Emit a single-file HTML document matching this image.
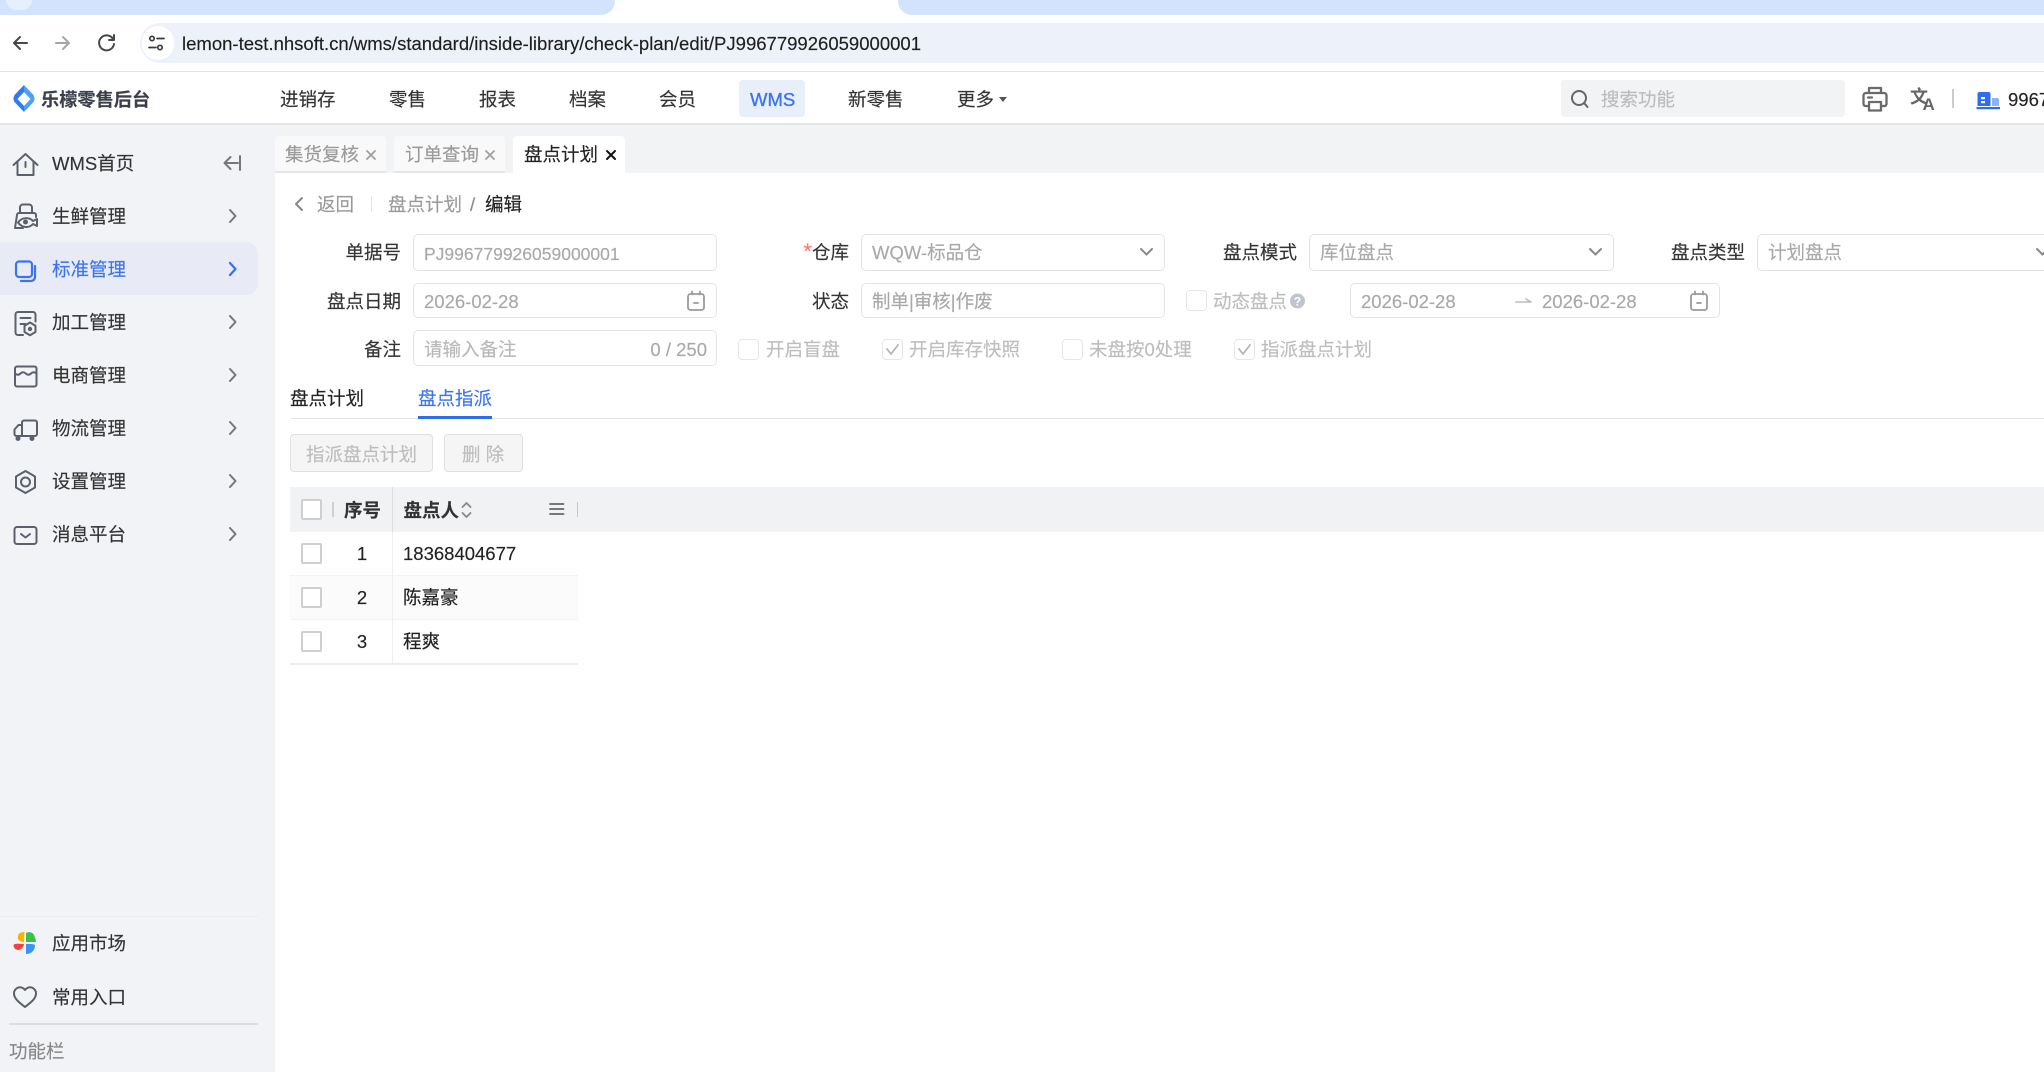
<!DOCTYPE html>
<html lang="zh-CN">
<head>
<meta charset="utf-8">
<title>盘点计划</title>
<style>
html,body{margin:0;padding:0;width:2044px;height:1072px;overflow:hidden;background:#fff}
body{position:relative;font-family:"Liberation Sans","Noto Sans CJK SC",sans-serif;font-size:18.5px;color:#333}
.a{position:absolute;box-sizing:border-box}
.t{position:absolute;white-space:nowrap;height:26px;line-height:26px;margin-top:1px;-webkit-text-stroke:.15px currentColor}
.r{text-align:right}
.inp{position:absolute;box-sizing:border-box;background:#fff;border:1.5px solid #e3e3e3;border-radius:5px}
.v{color:#a8a8a8}
.cb{position:absolute;box-sizing:border-box;width:21px;height:21px;border:1.5px solid #e6e6e6;border-radius:4px;background:#fff}
.cbt{position:absolute;box-sizing:border-box;width:21px;height:21px;border:2.5px solid #cfcfcf;border-radius:2px;background:#fff}
.dis{color:#bdbdbd}
.row{margin-top:0}
svg{position:absolute;left:0;top:0;overflow:visible}
</style>
</head>
<body>
<!-- browser chrome -->
<div class="a" style="left:0;top:0;width:615px;height:15px;background:#d3e3fd;border-bottom-right-radius:14px"></div>
<div class="a" style="left:898px;top:0;width:1146px;height:15px;background:#d3e3fd;border-bottom-left-radius:14px"></div>
<div class="a" style="left:6px;top:-14px;width:26px;height:24px;background:#e6effd;border-radius:10px"></div>
<div class="a" style="left:0;top:15px;width:2044px;height:57px;background:#fff;border-bottom:1.5px solid #e2e2e2"></div>
<div class="a" style="left:140px;top:23px;width:1904px;height:40px;background:#edf1f9;border-radius:20px 0 0 20px"></div>
<div class="a" style="left:142px;top:26px;width:32px;height:34px;background:#fff;border-radius:17px"></div>
<div class="t" style="left:182px;top:30px;font-size:18.53px;color:#1f1f1f">lemon-test.nhsoft.cn/wms/standard/inside-library/check-plan/edit/PJ996779926059000001</div>

<!-- header -->
<div class="a" style="left:0;top:72px;width:2044px;height:53px;background:#fff;border-bottom:2px solid #e4e5e7"></div>
<div class="t" style="left:41px;top:86px;font-size:18.2px;font-weight:bold;color:#3a3f4a">乐檬零售后台</div>
<div class="t" style="left:280px;top:86px">进销存</div>
<div class="t" style="left:389px;top:86px">零售</div>
<div class="t" style="left:479px;top:86px">报表</div>
<div class="t" style="left:569px;top:86px">档案</div>
<div class="t" style="left:659px;top:86px">会员</div>
<div class="a" style="left:739px;top:80px;width:66px;height:37px;background:#e8effb;border-radius:4px"></div>
<div class="t" style="left:750px;top:86px;color:#3b74f2;font-size:18.5px;-webkit-text-stroke:.35px #3b74f2">WMS</div>
<div class="t" style="left:848px;top:86px">新零售</div>
<div class="t" style="left:957px;top:86px">更多</div>
<div class="a" style="left:1561px;top:80px;width:284px;height:37px;background:#f2f3f5;border-radius:4px"></div>
<div class="t" style="left:1601px;top:86px;color:#bcbcbc">搜索功能</div>
<div class="a" style="left:1952px;top:89px;width:1.5px;height:19px;background:#ccc"></div>
<div class="t" style="left:2008px;top:86px;color:#222">9967</div>

<!-- sidebar -->
<div class="a" style="left:0;top:125px;width:275px;height:947px;background:#f2f3f6"></div>
<div class="a" style="left:0;top:242px;width:258px;height:53px;background:#e8ebf5;border-radius:0 12px 12px 0"></div>
<div class="t" style="left:52px;top:150px">WMS首页</div>
<div class="t" style="left:52px;top:203px">生鲜管理</div>
<div class="t" style="left:52px;top:256px;color:#3b74f2">标准管理</div>
<div class="t" style="left:52px;top:309px">加工管理</div>
<div class="t" style="left:52px;top:362px">电商管理</div>
<div class="t" style="left:52px;top:415px">物流管理</div>
<div class="t" style="left:52px;top:468px">设置管理</div>
<div class="t" style="left:52px;top:521px">消息平台</div>
<div class="a" style="left:0;top:916px;width:258px;height:1px;background:#ecedf0"></div>
<div class="t" style="left:52px;top:930px">应用市场</div>
<div class="t" style="left:52px;top:984px">常用入口</div>
<div class="a" style="left:9px;top:1023px;width:249px;height:1.5px;background:#dcdde1"></div>
<div class="t" style="left:9px;top:1038px;color:#888">功能栏</div>

<!-- page tabs -->
<div class="a" style="left:275px;top:125px;width:1769px;height:48px;background:#f2f3f5"></div>
<div class="a" style="left:275px;top:136px;width:111px;height:37px;background:#f9f9f9;border-radius:4px 4px 0 0;border-bottom:2px solid #e6e6e6"></div>
<div class="a" style="left:394px;top:136px;width:111px;height:37px;background:#f9f9f9;border-radius:4px 4px 0 0;border-bottom:2px solid #e6e6e6"></div>
<div class="a" style="left:513px;top:136px;width:112px;height:37px;background:#fff;border-radius:4px 4px 0 0"></div>
<div class="t" style="left:285px;top:141px;color:#9a9a9a">集货复核</div>
<div class="t" style="left:405px;top:141px;color:#9a9a9a">订单查询</div>
<div class="t" style="left:524px;top:141px;color:#222">盘点计划</div>

<!-- breadcrumb -->
<div class="t" style="left:317px;top:191px;color:#9a9a9a">返回</div>
<div class="a" style="left:371px;top:196px;width:1px;height:16px;background:#e6e6e6"></div>
<div class="t" style="left:388px;top:191px;color:#9a9a9a">盘点计划</div>
<div class="t" style="left:470px;top:191px;color:#888">/</div>
<div class="t" style="left:485px;top:191px;color:#222">编辑</div>

<!-- form -->
<div class="t r" style="left:301px;width:100px;top:239px">单据号</div>
<div class="inp" style="left:413px;top:234px;width:304px;height:37px"></div>
<div class="t v" style="left:424px;top:240px;font-size:17.5px">PJ996779926059000001</div>
<div class="t r" style="left:749px;width:100px;top:239px"><span style="color:#f77;font-size:22px;line-height:20px">*</span>仓库</div>
<div class="inp" style="left:861px;top:234px;width:304px;height:37px"></div>
<div class="t v" style="left:872px;top:239px">WQW-标品仓</div>
<div class="t r" style="left:1197px;width:100px;top:239px">盘点模式</div>
<div class="inp" style="left:1309px;top:234px;width:305px;height:37px"></div>
<div class="t v" style="left:1320px;top:239px">库位盘点</div>
<div class="t r" style="left:1645px;width:100px;top:239px">盘点类型</div>
<div class="inp" style="left:1757px;top:234px;width:320px;height:37px"></div>
<div class="t v" style="left:1768px;top:239px">计划盘点</div>

<div class="t r" style="left:301px;width:100px;top:288px">盘点日期</div>
<div class="inp" style="left:413px;top:283px;width:304px;height:35px"></div>
<div class="t v" style="left:424px;top:288px">2026-02-28</div>
<div class="t r" style="left:749px;width:100px;top:288px">状态</div>
<div class="inp" style="left:861px;top:283px;width:304px;height:35px"></div>
<div class="t v" style="left:872px;top:288px">制单|审核|作废</div>
<div class="cb" style="left:1186px;top:290px"></div>
<div class="t dis" style="left:1213px;top:288px">动态盘点</div>
<div class="inp" style="left:1350px;top:283px;width:370px;height:35px"></div>
<div class="t v" style="left:1361px;top:288px">2026-02-28</div>
<div class="t v" style="left:1542px;top:288px">2026-02-28</div>

<div class="t r" style="left:301px;width:100px;top:336px">备注</div>
<div class="inp" style="left:413px;top:330px;width:304px;height:36px"></div>
<div class="t v" style="left:424px;top:336px;color:#b8b8b8">请输入备注</div>
<div class="t r v" style="left:600px;width:107px;top:336px">0 / 250</div>
<div class="cb" style="left:738px;top:339px"></div>
<div class="t dis" style="left:766px;top:336px">开启盲盘</div>
<div class="cb" style="left:882px;top:339px"></div>
<div class="t dis" style="left:909px;top:336px">开启库存快照</div>
<div class="cb" style="left:1062px;top:339px"></div>
<div class="t dis" style="left:1089px;top:336px">未盘按0处理</div>
<div class="cb" style="left:1234px;top:339px"></div>
<div class="t dis" style="left:1261px;top:336px">指派盘点计划</div>

<!-- inner tabs -->
<div class="a" style="left:291px;top:417.500px;width:1753px;height:1px;background:#e3e3e3"></div>
<div class="t" style="left:290px;top:385px;color:#222">盘点计划</div>
<div class="t" style="left:418px;top:385px;color:#3b74f2">盘点指派</div>
<div class="a" style="left:418px;top:416px;width:74px;height:3px;background:#2f6cf0"></div>

<!-- buttons -->
<div class="a" style="left:290px;top:434px;width:143px;height:38px;background:#f5f5f5;border:1.5px solid #e0e0e0;border-radius:4px"></div>
<div class="t" style="left:306px;top:441px;color:#bdbdbd">指派盘点计划</div>
<div class="a" style="left:444px;top:434px;width:79px;height:38px;background:#f5f5f5;border:1.5px solid #e0e0e0;border-radius:4px"></div>
<div class="t" style="left:462px;top:441px;color:#bdbdbd">删 除</div>

<!-- table -->
<div class="a" style="left:290px;top:487px;width:1754px;height:45px;background:#f1f2f4"></div>
<div class="a" style="left:290px;top:576px;width:288px;height:44px;background:#fafbfa"></div>
<div class="a" style="left:290px;top:575px;width:288px;height:1px;background:#f3f3f3"></div>
<div class="a" style="left:290px;top:619px;width:288px;height:1px;background:#f3f3f3"></div>
<div class="a" style="left:290px;top:663px;width:288px;height:1.5px;background:#ececec"></div>
<div class="a" style="left:391.500px;top:487px;width:1.5px;height:176px;background:#eeeff1"></div>
<div class="a" style="left:391.500px;top:487px;width:1.5px;height:45px;background:#dcdee2"></div>
<div class="cbt" style="left:301px;top:499px"></div>
<div class="a" style="left:332px;top:502px;width:1.5px;height:15px;background:#d0d0d0"></div>
<div class="t" style="left:344px;top:497px;font-weight:bold;color:#333">序号</div>
<div class="t" style="left:403.500px;top:497px;font-weight:bold;color:#333">盘点人</div>
<div class="a" style="left:576.500px;top:502px;width:1.5px;height:15px;background:#c8c8c8"></div>
<div class="cbt" style="left:301px;top:543px"></div>
<div class="cbt" style="left:301px;top:587px"></div>
<div class="cbt" style="left:301px;top:631px"></div>
<div class="t row" style="left:342px;width:40px;text-align:center;top:541px;color:#222">1</div>
<div class="t row" style="left:342px;width:40px;text-align:center;top:585px;color:#222">2</div>
<div class="t row" style="left:342px;width:40px;text-align:center;top:629px;color:#222">3</div>
<div class="t row" style="left:403px;top:541px;color:#222">18368404677</div>
<div class="t row" style="left:403px;top:585px;color:#222">陈嘉豪</div>
<div class="t row" style="left:403px;top:629px;color:#222">程爽</div>

<!-- all icons -->
<svg width="2044" height="1072" viewBox="0 0 2044 1072" fill="none" stroke-linecap="round" stroke-linejoin="round">
  <!-- browser nav -->
  <g stroke="#474747" stroke-width="2">
    <path d="M27 43H14M20 37l-6 6 6 6"/>
    <path d="M56 43h13M63 37l6 6-6 6" stroke="#a5a5a5"/>
    <path d="M113 39a7.500 7.500 0 1 0 1 5M114 35v5h-5"/>
  </g>
  <g stroke="#3a3a3a" stroke-width="1.700">
    <circle cx="152" cy="38.500" r="2.200"/><path d="M157 38.500h7M149 47.500h7"/><circle cx="160" cy="47.500" r="2.200"/>
  </g>
  <!-- logo -->
  <path d="M24 85L14.500 95Q12.500 99 14.500 102L24 112V106L17.500 99 24 92z" fill="#2f7bf2"/>
  <path d="M24 85L33.500 95Q35.500 99 33.500 102L24 112V106L30.500 99 24 92z" fill="#4d9ff7"/>
  <!-- more caret -->
  <path d="M999 97h8l-4 5z" fill="#555"/>
  <!-- search -->
  <g stroke="#666" stroke-width="2"><circle cx="1579" cy="98" r="7"/><path d="M1584.500 103.500l3 3.500"/></g>
  <!-- printer -->
  <g stroke="#6a6a6a" stroke-width="2.300">
    <path d="M1869 93v-5h12v5"/>
    <path d="M1869 106h-3.500a2 2 0 0 1-2-2v-8.500a2.500 2.500 0 0 1 2.500-2.500h18a2.500 2.500 0 0 1 2.500 2.500V104a2 2 0 0 1-2 2H1881"/>
    <path d="M1869 102v8.500h12V102zM1868 97.500h4"/>
  </g>
  <!-- translate -->
  <text x="1910" y="103" font-family="'Noto Sans CJK SC',sans-serif" font-size="18" font-weight="bold" fill="#666" stroke="none">文</text>
  <text x="1922.500" y="110" font-family="'Liberation Sans',sans-serif" font-size="17" font-weight="bold" fill="#666" stroke="none">A</text>
  <!-- building -->
  <path d="M1977.500 94a2 2 0 0 1 2-2h9a2 2 0 0 1 2 2v12h-13z" fill="#2f6cf0"/>
  <path d="M1992 98h5a2 2 0 0 1 2 2v6h-7z" fill="#8db2f8"/>
  <rect x="1976.500" y="107" width="23.500" height="2.200" fill="#2f6cf0"/>
  <rect x="1981" y="97" width="4" height="2.200" fill="#fff"/><rect x="1981" y="101" width="4" height="2.200" fill="#fff"/>
  <!-- sidebar icons -->
  <g stroke="#5c606c" stroke-width="2">
    <path d="M13.500 165L25.500 154 37.500 165M17.500 162v13h16v-13M25.500 162v5"/>
    <path d="M240 156v14M238 163h-13.500M230.500 157l-6 6 6 6" stroke="#777"/>
    <!-- bag + eye -->
    <path d="M20 213v-5.500a3 3 0 0 1 3-3h6a3 3 0 0 1 3 3V213M15 228l2-13a2 2 0 0 1 2-2h15a2 2 0 0 1 2 2v2M15 228h8"/>
    <path d="M18 222.500c4-5.500 11-5.500 15-1.500l4-2v7l-4-2c-4 4.500-11 4-15-1.500z"/>
    <circle cx="25.500" cy="222" r="1.500" fill="#5c606c"/>
    <!-- doc -->
    <path d="M23 335h-5a2.500 2.500 0 0 1-2.500-2.500v-18a2.500 2.500 0 0 1 2.500-2.500h15a2.500 2.500 0 0 1 2.500 2.500v7M20.500 318h10M20.500 324h5"/>
    <path d="M30 322.500l5.500 3.200v6.300l-5.500 3.200-5.500-3.200v-6.300z"/><circle cx="30" cy="329" r="1.200"/>
    <!-- store -->
    <rect x="15" y="366.500" width="21.500" height="20" rx="2"/>
    <path d="M15 373.500q3 2.500 5.500 0t5.250 0 5.250 0 5.500 0"/>
    <!-- truck -->
    <path d="M22 436v-13.500a2 2 0 0 1 2-2h11a2 2 0 0 1 2 2V434a2 2 0 0 1-2 2H22zM22 425h-3.500l-4 4.500V434a2 2 0 0 0 2 2H22"/>
    <circle cx="18" cy="438.500" r="1.500" fill="#5c606c"/><circle cx="32" cy="438.500" r="1.500" fill="#5c606c"/>
    <!-- settings -->
    <path d="M25.500 471l9.500 5.500v11l-9.500 5.500-9.500-5.500v-11z"/><circle cx="25.500" cy="482" r="4.500"/>
    <!-- mail -->
    <rect x="14.500" y="527" width="22" height="17" rx="2.500"/><path d="M21 534l4.500 3.500 4.500-3.500"/>
    <!-- heart -->
    <path d="M25 1007c-5-4-11-8-11-13.500a6 6 0 0 1 11-3.500 6 6 0 0 1 11 3.500c0 5.500-6 9.500-11 13.500z"/>
  </g>
  <path d="M23 261.500H19a3 3 0 0 0-3 3v9.500a3 3 0 0 0 3 3h10a3 3 0 0 0 3-3v-9.500a3 3 0 0 0-3-3zM35 266v11a4 4 0 0 1-4 4H21" stroke="#3b74f2" stroke-width="2.200"/>
  <g stroke="#777" stroke-width="2">
    <path d="M230 210l5.500 6-5.500 6M230 316l5.500 6-5.500 6M230 369l5.500 6-5.500 6M230 422l5.500 6-5.500 6M230 475l5.500 6-5.500 6M230 528l5.500 6-5.500 6"/>
    <path d="M230 263l5.500 6-5.500 6" stroke="#3b74f2" stroke-width="2.400"/>
  </g>
  <!-- pinwheel -->
  <g transform="translate(-1 0)">
    <path d="M25 942c-5 0-7-3-6-6 .5-3 3-4 6.500-4z" fill="#f7b500"/>
    <path d="M27 942v-9c4-2 7 0 8 2 1 3 2 5 2 7z" fill="#37c24b"/>
    <path d="M27 944c5 0 8 0 9 1 0 5-3 9-9 9z" fill="#3d92f5"/>
    <path d="M25 944c-5 0-9-1-10.500 1 0 3 2 5 5 5 2 0 5-2 5.500-6z" fill="#f5413f"/>
  </g>
  <!-- tab close -->
  <g stroke="#a0a0a0" stroke-width="1.800">
    <path d="M367 151l8 8M375 151l-8 8M486 151l8 8M494 151l-8 8"/>
    <path d="M607 151l8 8M615 151l-8 8" stroke="#111" stroke-width="2"/>
  </g>
  <!-- back chevron -->
  <path d="M302 198l-6 6 6 6" stroke="#888" stroke-width="2"/>
  <!-- select chevrons -->
  <g stroke="#888" stroke-width="2">
    <path d="M1141 249l5.500 5.500 5.500-5.500M1590 249l5.500 5.500 5.500-5.500M2037 249l5.500 5.500 5.500-5.500"/>
  </g>
  <!-- calendars -->
  <g stroke="#9a9a9a" stroke-width="1.800">
    <rect x="688" y="294" width="16" height="16" rx="2.500"/><path d="M692 291.500v3M700 291.500v3M694 303h4"/>
    <rect x="1691" y="294" width="16" height="16" rx="2.500"/><path d="M1695 291.500v3M1703 291.500v3M1697 303h4"/>
  </g>
  <!-- range arrow -->
  <path d="M1516 302h15l-5-3" stroke="#bbb" stroke-width="1.600"/>
  <!-- help -->
  <circle cx="1297.500" cy="301" r="7.500" fill="#c0c4cc"/>
  <text x="1297.500" y="305.500" text-anchor="middle" font-family="'Liberation Sans',sans-serif" font-size="12" font-weight="bold" fill="#fff">?</text>
  <!-- checkbox ticks -->
  <g stroke="#b5b5b5" stroke-width="1.800">
    <path d="M887 349l4 5 7-9M1239 349l4 5 7-9"/>
  </g>
  <!-- sort + menu -->
  <g stroke="#888" stroke-width="1.800">
    <path d="M462.500 507l4-4 4 4M462.500 513l4 4 4-4"/>
    <path d="M550 504h13.500M550 509h13.500M550 514h13.500" stroke="#666"/>
  </g>
</svg>
</body>
</html>
